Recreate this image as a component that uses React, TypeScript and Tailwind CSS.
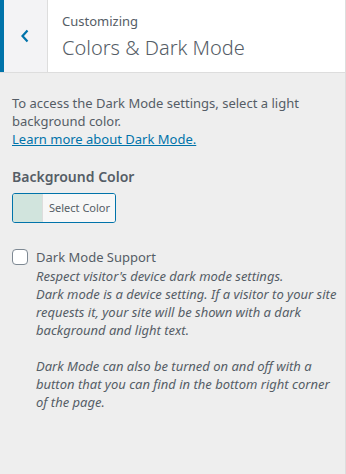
import React from "react";

export default function App() {
  return (
    <div className="w-[346px] h-[474px] bg-[#eeeeee] border-r border-[#dddddd] text-[#50575e] overflow-hidden" style={{ fontFamily: '"Noto Sans", "Open Sans", sans-serif' }}>
      <div className="flex h-[73px] border-b border-[#dddddd] bg-white">
        <div className="w-[48px] flex items-center justify-center bg-[#f3f3f5] border-l-4 border-[#0073aa] border-r border-r-[#dddddd]">
          <svg width="10" height="14" viewBox="0 0 10 14" className="ml-[-2px]">
            <path d="M7.5 1.5 L2.5 7 L7.5 12.5" stroke="#0073aa" strokeWidth="2.2" fill="none" />
          </svg>
        </div>
        <div className="flex flex-col pl-[14px] pt-[11px]">
          <span className="text-[13px] leading-[20px] text-[#555d66]">Customizing</span>
          <span className="text-[20px] leading-[28px] font-light text-[#555d66] mt-[3px]">Colors &amp; Dark Mode</span>
        </div>
      </div>
      <div className="px-[12px] pt-[21px]">
        <p className="text-[13px] leading-[18px] text-[#555d66]">
          To access the Dark Mode settings, select a light background color.
          <br />
          <a className="text-[#0073aa] underline">Learn more about Dark Mode.</a>
        </p>
        <div className="mt-[19px] text-[14px] leading-[20px] font-semibold text-[#555d66]">Background Color</div>
        <div className="mt-[6px] flex w-[104px] h-[30px] border border-[#0073aa] rounded-[3px] overflow-hidden">
          <div className="w-[30px] bg-[#d1e4dd] border-r border-[#dddddd]"></div>
          <div className="flex-1 bg-[#f7f7f7] flex items-center pl-[6px] text-[11px] text-[#555d66]">Select Color</div>
        </div>
        <div className="mt-[25px] flex">
          <div className="w-[16px] h-[16px] mt-[1px] rounded-[4px] border border-[#7e8993] bg-white shrink-0"></div>
          <div className="ml-[8px] w-[304px] shrink-0">
            <div className="text-[13px] leading-[18px] text-[#555d66]">Dark Mode Support</div>
            <div className="mt-[1px] text-[13px] leading-[18px] italic text-[#555d66]">
              Respect visitor's device dark mode settings.
              <br />
              Dark mode is a device setting. If a visitor to your site requests it, your site will be shown with a dark background and light text.
              <br />
              <br />
              Dark Mode can also be turned on and off with a button that you can find in the bottom right corner of the page.
            </div>
          </div>
        </div>
      </div>
    </div>
  );
}
